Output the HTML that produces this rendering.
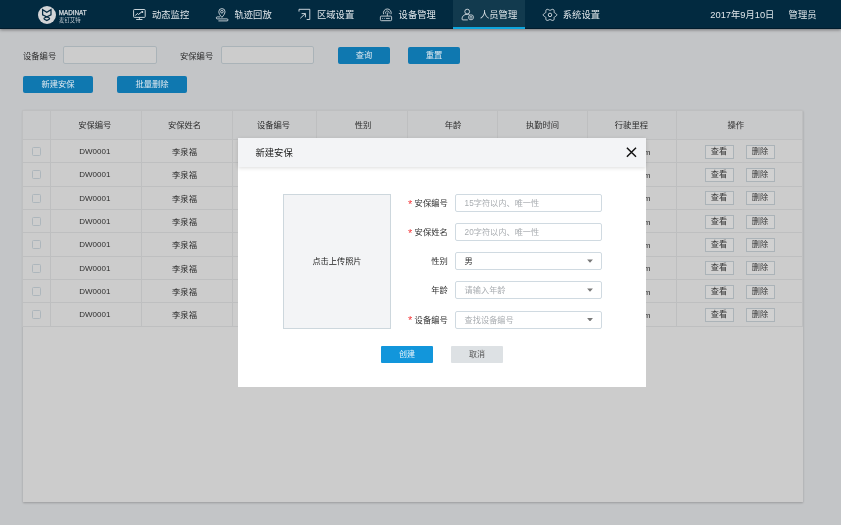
<!DOCTYPE html>
<html lang="zh-CN">
<head>
<meta charset="utf-8">
<title>人员管理 - 新建安保</title>
<style>
*{box-sizing:border-box;margin:0;padding:0}
html,body{width:841px;height:525px;overflow:hidden}
body{position:relative;will-change:transform;background:#c3c5c7;font-family:"Liberation Sans","Noto Sans CJK SC",sans-serif;color:#2b2b2b;font-size:8px;line-height:1}
.abs{position:absolute;white-space:nowrap}
/* nav */
#nav{position:absolute;left:0;top:0;width:841px;height:29px;background:#022a40;box-shadow:0 1px 3px rgba(0,0,0,.4);border-bottom:1px solid #011c2d}
#nav .item{position:absolute;top:1.4px;height:29px;line-height:29px;color:#e0e6ea;font-size:9.3px;white-space:nowrap}
#nav .active{position:absolute;left:453px;top:0;width:71.5px;height:29px;background:#123a4e;border-bottom:2px solid #0ea5dc}
#nav svg{position:absolute;overflow:visible}
/* filter */
.lbl{position:absolute;font-size:8.3px;color:#2e2e2e;white-space:nowrap;line-height:18px;height:18px;margin-top:1.2px}
.inp{position:absolute;height:18px;background:#cccccc;border:1px solid #aab3b8;border-radius:2px}
.btn{position:absolute;background:#0f78b0;color:#dfe9f0;font-size:8.3px;text-align:center;border-radius:2px;white-space:nowrap}
/* table */
#card{position:absolute;left:23px;top:110px;width:780px;height:392px;background:#cccccc;box-shadow:0 1px 2px rgba(0,0,0,.22)}
#tbl{position:absolute;left:22px;top:110px;width:781px;border-collapse:separate;border-spacing:0;table-layout:fixed;font-size:8.3px;color:#2e2e2e;border-left:1px solid #bebfc0;border-top:1px solid #bebfc0}
#tbl th,#tbl td{border-right:1px solid #bebfc0;border-bottom:1px solid #bebfc0;text-align:center;font-weight:normal;padding:0.8px 0 0 0;vertical-align:middle;white-space:nowrap;overflow:hidden}
#tbl th{height:29px;background:#c8c9ca}
#tbl td{height:23.35px;background:#cccccc;padding-top:1.8px}
.cb{display:inline-block;width:9px;height:9px;border:1px solid #adb6bc;border-radius:1.5px;background:#cdcdcd;vertical-align:middle;position:relative;top:-0.8px;left:-0.3px}
.ab{display:inline-block;width:29px;height:14px;line-height:12.6px;border:1px solid #abb3b8;background:#d1d1d1;font-size:8.2px;color:#383838;vertical-align:middle;position:relative;top:-0.4px}
#tbl tr>*:nth-child(2){padding-right:2.4px}
#tbl tr>*:nth-child(3){padding-right:5px}
#tbl tr>*:nth-child(4){padding-right:2px}
#tbl tr>*:nth-child(5){padding-left:2.2px}
#tbl tr>*:nth-child(6){padding-left:1px}
#tbl tr>*:nth-child(8){padding-right:1.2px}
#tbl th:nth-child(9){padding-right:7.6px}
.en{font-size:8px}
.km{font-size:8px;position:relative;left:1.5px}
/* modal */
#modal{position:absolute;left:238px;top:138px;width:408px;height:249px;background:#fff}
#mhead{position:absolute;left:0;top:0;width:408px;height:29px;background:#f3f4f6;box-shadow:0 1px 4px rgba(0,0,0,.14)}
#mtitle{position:absolute;left:17.5px;top:0.5px;line-height:29px;font-size:9.3px;color:#222}
#upload{position:absolute;left:45px;top:56px;width:108px;height:135px;background:#f3f4f6;border:1px solid #cdd7dd;text-align:center;line-height:133px;font-size:8.2px;color:#222}
.ml{position:absolute;left:150px;width:59.8px;text-align:right;font-size:8.3px;color:#333;line-height:18px;height:18px;white-space:nowrap;margin-top:0.3px}
.ml i{position:absolute;font-style:normal;color:#f5393b;font-size:11px;line-height:11px;left:20px;top:4.6px}
.mi{position:absolute;left:217px;width:147px;height:18px;border:1px solid #d0dae1;border-radius:2px;background:#fff;font-size:8.2px;line-height:16px;padding:1.2px 0 0 8.6px;color:#a9adb1;white-space:nowrap}
.mi.v{color:#333}
.mi b{position:absolute;right:8.1px;top:6.4px;width:5.8px;height:3.4px;background:#787878;clip-path:polygon(0 0,100% 0,50% 100%)}
</style>
</head>
<body>
<div id="nav">
  <div class="active"></div>
  <!-- logo -->
  <svg style="left:37.8px;top:5.7px" width="18" height="18" viewBox="0 0 18 18">
    <circle cx="9" cy="9" r="9" fill="#d3d5d7"/>
    <path d="M4.6 8.9L4.6 3.6L8.8 6.2L13 3.6L13 8.9L6.4 12Q5.7 12.6 6.4 13.2L8.8 14.6L11.2 13.2Q11.9 12.6 11.2 12Z" fill="none" stroke="#062b42" stroke-width="1.25" stroke-linejoin="miter"/>
  </svg>
  <div class="abs" style="left:58.7px;top:9.6px;font-size:6.3px;color:#d9dee2;line-height:6.4px;-webkit-text-stroke:0.25px #d9dee2">MADINAT</div>
  <div class="abs" style="left:59px;top:16.6px;font-size:5.4px;color:#c3ccd3;line-height:6px">麦钉艾特</div>

  <!-- 动态监控 icon -->
  <svg style="left:133px;top:9px" width="13" height="12" viewBox="0 0 13 12" fill="none" stroke="#dfe5ea" stroke-width="0.9">
    <rect x="0.6" y="0.5" width="11.6" height="7.9" rx="0.8"/>
    <path d="M6.4 8.4V10.4M3.2 10.5H9.4"/>
    <path d="M2.3 6.6L4.3 4.5L5.6 5.4L8.6 3" stroke-width="1"/>
    <circle cx="9.3" cy="2.9" r="1" fill="#dfe5ea" stroke="none"/>
  </svg>
  <div class="item" style="left:152px">动态监控</div>

  <!-- 轨迹回放 icon -->
  <svg style="left:215px;top:7.5px" width="14" height="14" viewBox="0 0 14 14" fill="none" stroke="#dfe5ea" stroke-width="0.85">
    <path d="M6.9 9.4C5.1 7.4 3.8 5.5 3.8 3.7A3.1 3.1 0 0 1 10 3.7C10 5.5 8.7 7.4 6.9 9.4Z"/>
    <circle cx="6.9" cy="3.7" r="1.3"/>
    <path d="M5 8.9H2.3A1 1 0 0 0 2.3 10.9H12A1 1 0 0 1 12 12.9H3.4"/>
  </svg>
  <div class="item" style="left:234.5px">轨迹回放</div>

  <!-- 区域设置 icon -->
  <svg style="left:298px;top:8px" width="13" height="13" viewBox="0 0 13 13" fill="none" stroke="#dfe5ea" stroke-width="0.9">
    <path d="M1 3.6V1.3H11.8V11.5H8.7"/>
    <path d="M2.3 10.3L7.3 5.6M3.6 5.6H7.4V9.3"/>
  </svg>
  <div class="item" style="left:317px">区域设置</div>

  <!-- 设备管理 icon -->
  <svg style="left:379px;top:7.5px" width="14" height="14" viewBox="0 0 14 14" fill="none" stroke="#dfe5ea" stroke-width="0.85">
    <rect x="1.4" y="8.1" width="11.2" height="4.6" rx="1"/>
    <path d="M8.3 8.1V4.6"/>
    <path d="M4.64 6.23A3.9 3.9 0 1 1 11.96 6.23"/>
    <path d="M6.51 5.55A1.9 1.9 0 1 1 10.09 5.55" stroke-width="0.8"/>
    <path d="M3.2 10.4H4M4.9 10.4H5.7M6.9 10.4H10.8" stroke-width="0.8"/>
  </svg>
  <div class="item" style="left:398.6px">设备管理</div>

  <!-- 人员管理 icon -->
  <svg style="left:461px;top:8px" width="14" height="13" viewBox="0 0 14 13" fill="none" stroke="#dfe5ea" stroke-width="0.85">
    <circle cx="6.2" cy="3.6" r="2.4"/>
    <path d="M6.8 11.9H1.9A0.9 0.9 0 0 1 1 11C1 8.2 3 6.3 6.2 6.3C7.2 6.3 8 6.5 8.6 6.8"/>
    <circle cx="10" cy="9.3" r="2.5" stroke-width="0.8"/>
    <circle cx="10" cy="9.3" r="1" stroke-width="0.7"/>
  </svg>
  <div class="item" style="left:480px">人员管理</div>

  <!-- 系统设置 icon -->
  <svg style="left:543px;top:8.6px" width="14" height="12" viewBox="0 0 14 12" fill="none" stroke="#dfe5ea" stroke-width="0.9" stroke-linejoin="round">
    <path d="M13.78 5.90L13.64 6.44L13.24 6.92L12.68 7.31L12.10 7.62L11.62 7.89L11.31 8.20L11.18 8.61L11.16 9.13L11.16 9.75L11.07 10.39L10.82 10.95L10.39 11.33L9.82 11.48L9.17 11.40L8.52 11.15L7.94 10.85L7.44 10.60L7.00 10.51L6.56 10.60L6.06 10.85L5.48 11.15L4.83 11.40L4.18 11.48L3.61 11.33L3.18 10.95L2.93 10.39L2.84 9.75L2.84 9.13L2.82 8.61L2.69 8.20L2.38 7.89L1.90 7.62L1.32 7.31L0.76 6.92L0.36 6.44L0.22 5.90L0.36 5.36L0.76 4.88L1.32 4.49L1.90 4.18L2.38 3.91L2.69 3.60L2.82 3.19L2.84 2.67L2.84 2.05L2.93 1.41L3.18 0.85L3.61 0.47L4.18 0.32L4.83 0.40L5.48 0.65L6.06 0.95L6.56 1.20L7.00 1.29L7.44 1.20L7.94 0.95L8.52 0.65L9.17 0.40L9.82 0.32L10.39 0.47L10.82 0.85L11.07 1.41L11.16 2.05L11.16 2.67L11.18 3.19L11.31 3.60L11.62 3.91L12.10 4.18L12.68 4.49L13.24 4.88L13.64 5.36Z"/>
    <circle cx="7" cy="5.9" r="1.75"/>
  </svg>
  <div class="item" style="left:562.8px">系统设置</div>

  <div class="item" style="left:710.3px;top:0.7px;font-size:9.3px">2017年9月10日</div>
  <div class="item" style="left:788.6px;top:0.7px;font-size:9.3px">管理员</div>
</div>
<!-- filter bar -->
<div class="lbl" style="left:23px;top:46px">设备编号</div>
<div class="inp" style="left:63.4px;top:46px;width:93.6px"></div>
<div class="lbl" style="left:180px;top:46px">安保编号</div>
<div class="inp" style="left:220.6px;top:46px;width:93.4px"></div>
<div class="btn" style="left:338px;top:46.5px;width:52px;height:17.5px;line-height:17.5px">查询</div>
<div class="btn" style="left:408px;top:46.5px;width:52px;height:17.5px;line-height:17.5px">重置</div>
<div class="btn" style="left:23px;top:76px;width:70px;height:17px;line-height:17px">新建安保</div>
<div class="btn" style="left:117px;top:76px;width:70px;height:17px;line-height:17px">批量删除</div>

<!-- table -->
<div id="card"></div>
<table id="tbl">
<colgroup><col style="width:28px"><col style="width:91px"><col style="width:91px"><col style="width:84px"><col style="width:91px"><col style="width:90px"><col style="width:90px"><col style="width:89px"><col style="width:126px"></colgroup>
<thead><tr><th></th><th>安保编号</th><th>安保姓名</th><th>设备编号</th><th>性别</th><th>年龄</th><th>执勤时间</th><th>行驶里程</th><th>操作</th></tr></thead>
<tbody>
<tr><td><span class="cb"></span></td><td class="en">DW0001</td><td>李泉福</td><td class="en">SB0001</td><td>男</td><td class="en">32</td><td class="en">2017-09-10</td><td><span class="km">120.50km</span></td><td><span class="ab" style="margin-right:12px">查看</span><span class="ab">删除</span></td></tr>
<tr><td><span class="cb"></span></td><td class="en">DW0001</td><td>李泉福</td><td class="en">SB0001</td><td>男</td><td class="en">32</td><td class="en">2017-09-10</td><td><span class="km">120.50km</span></td><td><span class="ab" style="margin-right:12px">查看</span><span class="ab">删除</span></td></tr>
<tr><td><span class="cb"></span></td><td class="en">DW0001</td><td>李泉福</td><td class="en">SB0001</td><td>男</td><td class="en">32</td><td class="en">2017-09-10</td><td><span class="km">120.50km</span></td><td><span class="ab" style="margin-right:12px">查看</span><span class="ab">删除</span></td></tr>
<tr><td><span class="cb"></span></td><td class="en">DW0001</td><td>李泉福</td><td class="en">SB0001</td><td>男</td><td class="en">32</td><td class="en">2017-09-10</td><td><span class="km">120.50km</span></td><td><span class="ab" style="margin-right:12px">查看</span><span class="ab">删除</span></td></tr>
<tr><td><span class="cb"></span></td><td class="en">DW0001</td><td>李泉福</td><td class="en">SB0001</td><td>男</td><td class="en">32</td><td class="en">2017-09-10</td><td><span class="km">120.50km</span></td><td><span class="ab" style="margin-right:12px">查看</span><span class="ab">删除</span></td></tr>
<tr><td><span class="cb"></span></td><td class="en">DW0001</td><td>李泉福</td><td class="en">SB0001</td><td>男</td><td class="en">32</td><td class="en">2017-09-10</td><td><span class="km">120.50km</span></td><td><span class="ab" style="margin-right:12px">查看</span><span class="ab">删除</span></td></tr>
<tr><td><span class="cb"></span></td><td class="en">DW0001</td><td>李泉福</td><td class="en">SB0001</td><td>男</td><td class="en">32</td><td class="en">2017-09-10</td><td><span class="km">120.50km</span></td><td><span class="ab" style="margin-right:12px">查看</span><span class="ab">删除</span></td></tr>
<tr><td><span class="cb"></span></td><td class="en">DW0001</td><td>李泉福</td><td class="en">SB0001</td><td>男</td><td class="en">32</td><td class="en">2017-09-10</td><td><span class="km">120.50km</span></td><td><span class="ab" style="margin-right:12px">查看</span><span class="ab">删除</span></td></tr>
</tbody>
</table>

<!-- modal -->
<div id="modal">
  <div id="mhead"><div id="mtitle">新建安保</div>
    <svg style="position:absolute;left:387.5px;top:9px" width="11" height="11" viewBox="0 0 11 11"><path d="M0.9 0.8L10 9.8M10 0.8L0.9 9.8" stroke="#111" stroke-width="1.45" fill="none"/></svg>
  </div>
  <div id="upload">点击上传照片</div>

  <div class="ml" style="top:56px"><i>*</i>安保编号</div>
  <div class="mi" style="top:56px">15字符以内、唯一性</div>
  <div class="ml" style="top:85px"><i>*</i>安保姓名</div>
  <div class="mi" style="top:85px">20字符以内、唯一性</div>
  <div class="ml" style="top:114px">性别</div>
  <div class="mi v" style="top:114px">男<b></b></div>
  <div class="ml" style="top:143px">年龄</div>
  <div class="mi" style="top:143px">请输入年龄<b></b></div>
  <div class="ml" style="top:172.6px"><i>*</i>设备编号</div>
  <div class="mi" style="top:172.6px">查找设备编号<b></b></div>

  <div class="abs" style="left:143px;top:208px;width:52px;height:17px;line-height:17.8px;background:#1296db;color:#e8f4fb;text-align:center;font-size:8px;border-radius:1px">创建</div>
  <div class="abs" style="left:213px;top:208px;width:52px;height:17px;line-height:17.8px;background:#dde1e4;color:#555;text-align:center;font-size:8px;border-radius:1px">取消</div>
</div>
</body>
</html>
